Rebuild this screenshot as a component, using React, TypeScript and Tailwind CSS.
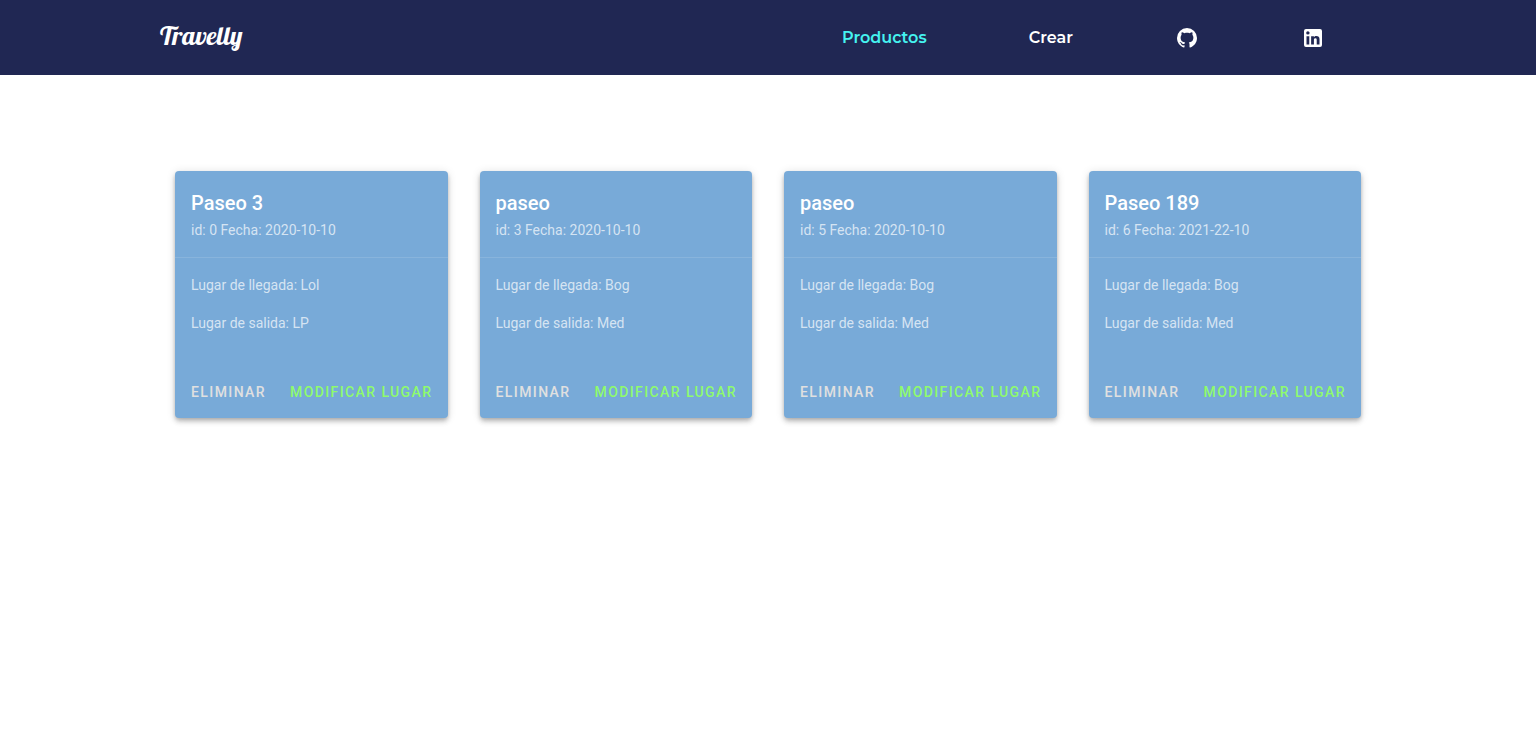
type Trip = {
  id: number;
  name: string;
  date: string;
  arrival: string;
  departure: string;
};

const trips: Trip[] = [
  { id: 0, name: "Paseo 3", date: "2020-10-10", arrival: "Lol", departure: "LP" },
  { id: 3, name: "paseo", date: "2020-10-10", arrival: "Bog", departure: "Med" },
  { id: 5, name: "paseo", date: "2020-10-10", arrival: "Bog", departure: "Med" },
  { id: 6, name: "Paseo 189", date: "2021-22-10", arrival: "Bog", departure: "Med" },
];

function GithubIcon() {
  return (
    <svg viewBox="0 0 24 24" className="size-6 fill-current" aria-hidden="true">
      <path d="M12,2A10,10 0 0,0 2,12C2,16.42 4.87,20.17 8.84,21.5C9.34,21.58 9.5,21.27 9.5,21C9.5,20.77 9.5,20.14 9.5,19.31C6.73,19.91 6.14,17.97 6.14,17.97C5.68,16.81 5.03,16.5 5.03,16.5C4.12,15.88 5.1,15.9 5.1,15.9C6.1,15.97 6.63,16.93 6.63,16.93C7.5,18.45 8.97,18 9.54,17.76C9.63,17.11 9.89,16.67 10.17,16.42C7.95,16.17 5.62,15.31 5.62,11.5C5.62,10.39 6,9.5 6.65,8.79C6.55,8.54 6.2,7.5 6.75,6.15C6.75,6.15 7.59,5.88 9.5,7.17C10.29,6.95 11.15,6.84 12,6.84C12.85,6.84 13.71,6.95 14.5,7.17C16.41,5.88 17.25,6.15 17.25,6.15C17.8,7.5 17.45,8.54 17.35,8.79C18,9.5 18.38,10.39 18.38,11.5C18.38,15.32 16.04,16.16 13.81,16.41C14.17,16.72 14.5,17.33 14.5,18.26C14.5,19.6 14.5,20.68 14.5,21C14.5,21.27 14.66,21.59 15.17,21.5C19.14,20.16 22,16.42 22,12A10,10 0 0,0 12,2Z" />
    </svg>
  );
}

function LinkedinIcon() {
  return (
    <svg viewBox="0 0 24 24" className="size-6 fill-current" aria-hidden="true">
      <path d="M19 3A2 2 0 0 1 21 5V19A2 2 0 0 1 19 21H5A2 2 0 0 1 3 19V5A2 2 0 0 1 5 3H19M18.5 18.5V13.2A3.26 3.26 0 0 0 15.24 9.94C14.39 9.94 13.4 10.46 12.92 11.24V10.13H10.13V18.5H12.92V13.57C12.92 12.8 13.54 12.17 14.31 12.17A1.4 1.4 0 0 1 15.71 13.57V18.5H18.5M6.88 8.56A1.68 1.68 0 0 0 8.56 6.88C8.56 5.95 7.81 5.19 6.88 5.19A1.69 1.69 0 0 0 5.19 6.88A1.69 1.69 0 0 0 6.88 8.56M8.27 18.5V10.13H5.5V18.5H8.27Z" />
    </svg>
  );
}

function Header() {
  return (
    <header className="bg-[#202753] text-white">
      <div className="mx-auto flex h-[75px] max-w-[1216px] items-center justify-between">
        <a
          href="#"
          className="pb-1 font-['Lobster','Liberation_Serif',serif] text-[26px] leading-8"
        >
          Travelly
        </a>
        <nav className="w-[585px] font-['Montserrat','Inter',sans-serif] text-base font-semibold">
          <ul className="flex items-center justify-around">
            <li>
              <a href="#productos" className="text-[#45f3f0]">
                Productos
              </a>
            </li>
            <li>
              <a href="#crear">Crear</a>
            </li>
            <li>
              <a href="#github" aria-label="GitHub">
                <GithubIcon />
              </a>
            </li>
            <li>
              <a href="#linkedin" aria-label="LinkedIn">
                <LinkedinIcon />
              </a>
            </li>
          </ul>
        </nav>
      </div>
    </header>
  );
}

function TripCard({ trip }: { trip: Trip }) {
  return (
    <article className="rounded bg-[#78aad8] text-sm leading-[22px] text-white/70 shadow-[0_2px_4px_-1px_rgba(0,0,0,0.2),0_4px_5px_0_rgba(0,0,0,0.14),0_1px_10px_0_rgba(0,0,0,0.12)]">
      <div className="border-b border-white/12 p-4">
        <h2 className="text-xl leading-8 font-medium text-white">{trip.name}</h2>
        <p>
          id: {trip.id} Fecha: {trip.date}
        </p>
      </div>
      <div className="flex flex-col gap-4 px-4 pt-4 pb-8">
        <p>Lugar de llegada: {trip.arrival}</p>
        <p>Lugar de salida: {trip.departure}</p>
      </div>
      <div className="flex items-center gap-2 p-2 font-medium tracking-widest whitespace-nowrap">
        <button type="button" className="h-9 px-2 text-[#e0e0e0] uppercase">
          Eliminar
        </button>
        <button type="button" className="h-9 px-2 text-[#8ffb6c] uppercase">
          Modificar lugar
        </button>
      </div>
    </article>
  );
}

export default function App() {
  return (
    <div className="min-h-screen bg-white font-['Roboto',sans-serif]">
      <Header />
      <main className="mx-auto grid max-w-[1186px] grid-cols-1 gap-8 pt-24 pb-8 sm:grid-cols-2 lg:grid-cols-4">
        {trips.map((trip) => (
          <TripCard key={trip.id} trip={trip} />
        ))}
      </main>
    </div>
  );
}
